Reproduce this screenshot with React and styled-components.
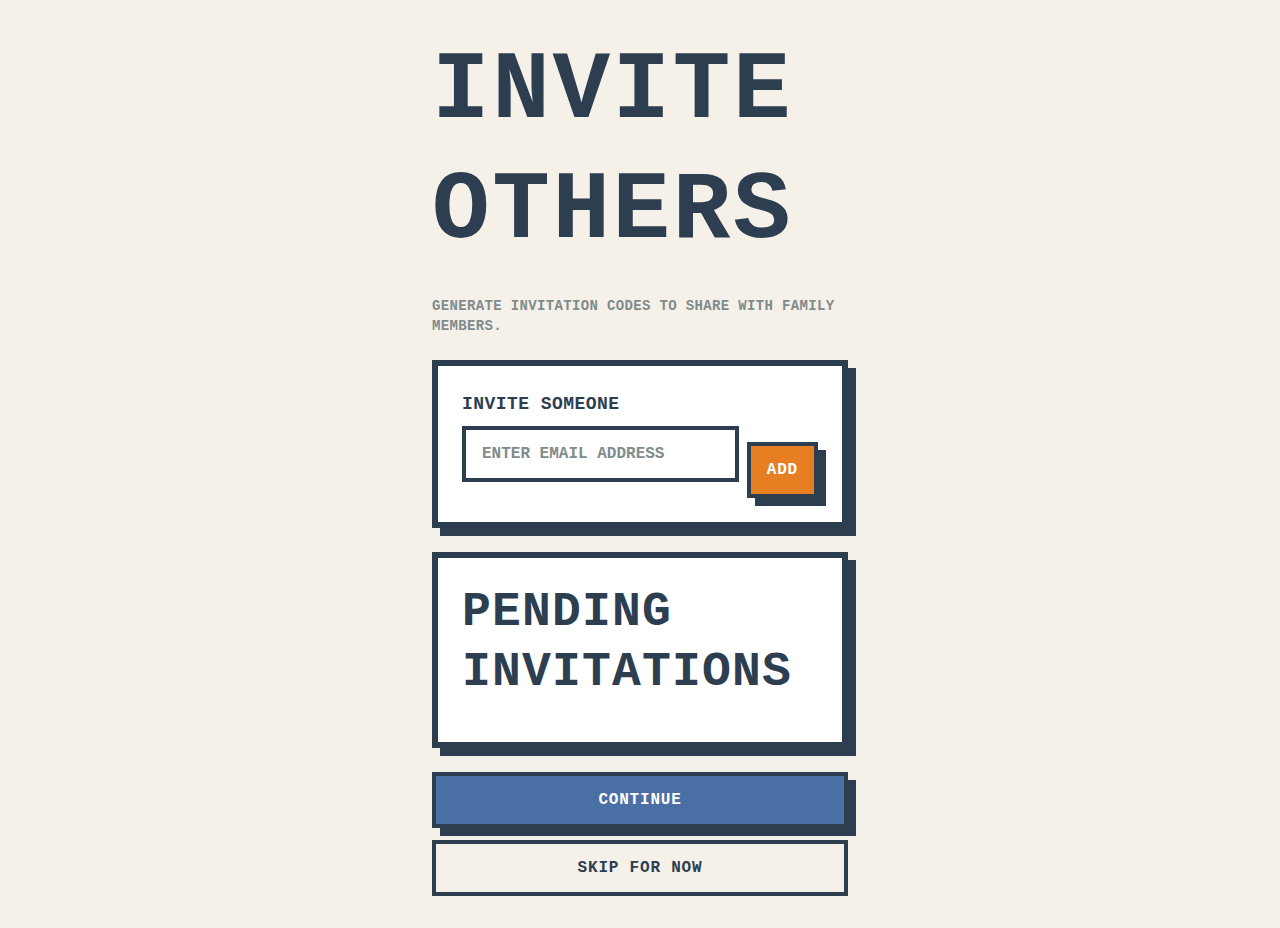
import React, { useState } from "react";
import styled, { createGlobalStyle } from "styled-components";

const dark = "#2c3e50";

const GlobalStyle = createGlobalStyle`
  * {
    box-sizing: border-box;
  }

  body {
    margin: 0;
    background: #f5f0e8;
    font-family: "Liberation Mono", "Courier New", monospace;
    color: ${dark};
  }
`;

export default function App() {
  const [email, setEmail] = useState("");

  return (
    <>
      <GlobalStyle />
      <Page>
        <Column>
          <Title>INVITE OTHERS</Title>
          <Subtitle>GENERATE INVITATION CODES TO SHARE WITH FAMILY MEMBERS.</Subtitle>

          <Card>
            <Label>INVITE SOMEONE</Label>
            <InviteRow>
              <EmailInput
                type="email"
                placeholder="ENTER EMAIL ADDRESS"
                value={email}
                onChange={(e) => setEmail(e.target.value)}
              />
              <AddButton>ADD</AddButton>
            </InviteRow>
          </Card>

          <Card>
            <CardTitle>PENDING INVITATIONS</CardTitle>
          </Card>

          <Actions>
            <PrimaryButton>CONTINUE</PrimaryButton>
            <GhostButton>SKIP FOR NOW</GhostButton>
          </Actions>
        </Column>
      </Page>
    </>
  );
}

const Page = styled.main`
  display: flex;
  justify-content: center;
  min-height: 100vh;
  padding: 32px 0;
`;

const Column = styled.div`
  display: flex;
  flex-direction: column;
  width: 416px;
`;

const Title = styled.h1`
  margin: 0 0 24px;
  font-size: 96px;
  line-height: 1.25;
  font-weight: 700;
  letter-spacing: 0.027em;
  color: ${dark};
`;

const Subtitle = styled.p`
  margin: 0 0 24px;
  font-size: 14px;
  line-height: 20px;
  font-weight: 700;
  letter-spacing: 0.025em;
  color: #7f8c8d;
`;

const Card = styled.section`
  margin-bottom: 24px;
  padding: 24px;
  background: #ffffff;
  border: 6px solid ${dark};
  box-shadow: 8px 8px 0 ${dark};
`;

const Label = styled.h3`
  margin: 0 0 8px;
  font-size: 18px;
  line-height: 28px;
  font-weight: 700;
  letter-spacing: 0.025em;
`;

const InviteRow = styled.div`
  display: flex;
  align-items: flex-start;
  gap: 8px;
`;

const EmailInput = styled.input`
  flex: 1;
  min-width: 0;
  height: 56px;
  padding: 14px 16px;
  border: 4px solid ${dark};
  border-radius: 0;
  background: #ffffff;
  font-family: inherit;
  font-size: 16px;
  font-weight: 700;
  line-height: 20px;
  color: ${dark};
  outline: none;

  &::placeholder {
    color: #7f8c8d;
  }
`;

const BaseButton = styled.button`
  height: 56px;
  padding: 14px 16px;
  border: 4px solid ${dark};
  border-radius: 0;
  font-family: inherit;
  font-size: 16px;
  font-weight: 700;
  line-height: 20px;
  letter-spacing: 0.05em;
  cursor: pointer;
`;

const AddButton = styled(BaseButton)`
  margin-top: 16px;
  background: #e67e22;
  color: #ffffff;
  box-shadow: 8px 8px 0 ${dark};
`;

const CardTitle = styled.h2`
  margin: 0 0 16px;
  font-size: 48px;
  line-height: 1.25;
  font-weight: 700;
  letter-spacing: 0.025em;
`;

const Actions = styled.div`
  display: flex;
  flex-direction: column;
  gap: 12px;
`;

const PrimaryButton = styled(BaseButton)`
  width: 100%;
  background: #4a6fa5;
  color: #ffffff;
  box-shadow: 8px 8px 0 ${dark};
`;

const GhostButton = styled(BaseButton)`
  width: 100%;
  background: transparent;
  color: ${dark};
`;
